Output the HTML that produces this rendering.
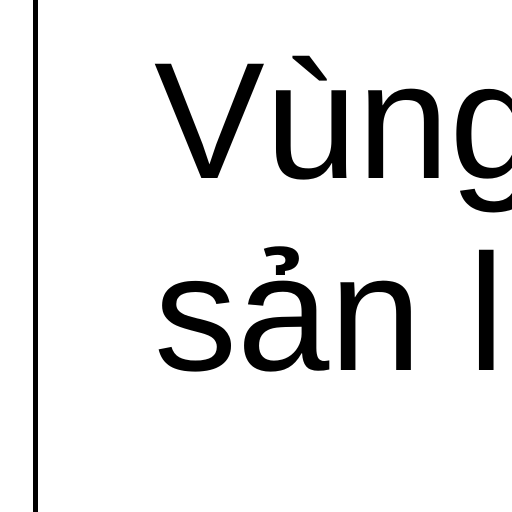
<!DOCTYPE html>
<html><head><meta charset="utf-8"><style>
html,body{margin:0;padding:0;background:#fff;width:512px;height:512px;overflow:hidden;position:relative}
.line{position:absolute;left:33px;top:0;width:5px;height:512px;background:#000}
.t{position:absolute;left:154px;top:26px;width:358px;overflow:hidden;font-family:"Liberation Sans",sans-serif;font-size:166px;line-height:192px;color:#000;white-space:nowrap}
</style></head><body>
<div class="line"></div>
<div class="t">Vùng<br>sản lượng</div>
</body></html>
